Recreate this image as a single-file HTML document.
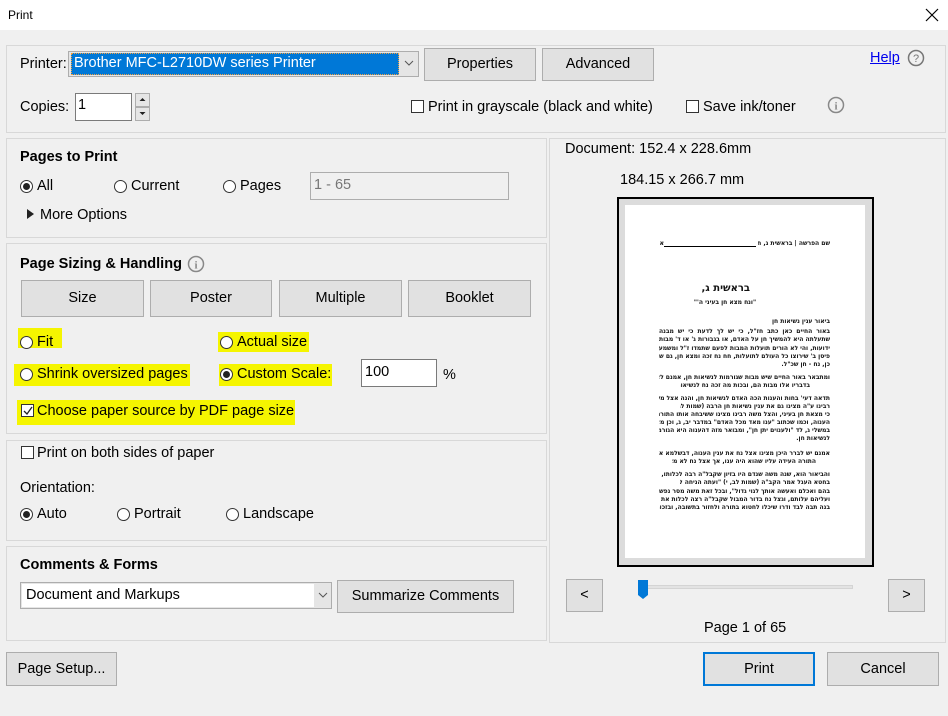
<!DOCTYPE html>
<html><head><meta charset="utf-8"><style>
*{box-sizing:border-box;margin:0;padding:0}
body{width:948px;height:716px;background:#f0f0f0;font-family:"Liberation Sans",sans-serif;font-size:14.5px;color:#000;position:relative;overflow:hidden}
.a{position:absolute}
.t{position:absolute;line-height:18px;white-space:nowrap}
.p{position:absolute;border:1px solid #d8d8d8}
.btn{position:absolute;background:#e1e1e1;border:1px solid #adadad;text-align:center;font-size:14.5px}
.r{position:absolute;width:13px;height:13px;border:1px solid #333;border-radius:50%;background:#fff}
.r.on::after{content:"";position:absolute;left:2px;top:2px;width:7px;height:7px;border-radius:50%;background:#222}
.c{position:absolute;width:13px;height:13px;border:1px solid #333;background:#fff}
.hl{position:absolute;background:#f5f500}
.b{font-weight:bold}
.inp{position:absolute;background:#fff;border:1px solid #7a7a7a}
.heb{position:absolute;direction:rtl;font-size:6px;font-weight:bold;line-height:7px;white-space:nowrap;overflow:hidden;text-align:justify;text-align-last:justify;color:#111;font-family:"DejaVu Sans",sans-serif}
</style></head><body>
<div class="a" style="left:0;top:0;width:948px;height:30px;background:#fff"></div>
<div class="t" style="left:8px;top:6px;font-size:12px">Print</div>
<svg class="a" style="left:925px;top:8px" width="14" height="14"><path d="M1 1L13 13M13 1L1 13" stroke="#000" stroke-width="1.2"/></svg>

<div class="p" style="left:6px;top:45px;width:940px;height:88px"></div>
<div class="t" style="left:20px;top:55px">Printer:</div>
<div class="a" style="left:68px;top:51px;width:351px;height:26px;background:#e5e5e5;border:1px solid #adadad"></div>
<div class="a" style="left:71px;top:53px;width:328px;height:22px;background:#0078d7;border:1px dotted #f0a040"></div>
<div class="t" style="left:74px;top:54px;color:#fff">Brother MFC-L2710DW series Printer</div>
<svg class="a" style="left:404px;top:60px" width="10" height="6"><path d="M1 1L5 5L9 1" stroke="#555" fill="none"/></svg>
<div class="btn" style="left:424px;top:48px;width:112px;height:33px;line-height:31px">Properties</div>
<div class="btn" style="left:542px;top:48px;width:112px;height:33px;line-height:31px">Advanced</div>
<div class="t" style="left:870px;top:49px;color:#0000ee;text-decoration:underline">Help</div>
<svg class="a" style="left:907px;top:49px" width="18" height="18"><circle cx="9" cy="9" r="7.5" stroke="#777" stroke-width="1.5" fill="none"/><text x="9" y="13" font-size="11" text-anchor="middle" fill="#777" font-family="Liberation Sans">?</text></svg>
<div class="t" style="left:20px;top:98px">Copies:</div>
<div class="inp" style="left:75px;top:93px;width:57px;height:28px"></div>
<div class="t" style="left:78px;top:96px">1</div>
<div class="a" style="left:135px;top:93px;width:15px;height:14px;background:#e5e5e5;border:1px solid #adadad"></div>
<div class="a" style="left:135px;top:107px;width:15px;height:14px;background:#e5e5e5;border:1px solid #adadad"></div>
<svg class="a" style="left:139px;top:97px" width="7" height="20"><path d="M0.5 4L3.5 1L6.5 4Z M0.5 15L3.5 18L6.5 15Z" fill="#222"/></svg>
<div class="c" style="left:411px;top:100px"></div>
<div class="t" style="left:428px;top:98px">Print in grayscale (black and white)</div>
<div class="c" style="left:686px;top:100px"></div>
<div class="t" style="left:703px;top:98px">Save ink/toner</div>
<svg class="a" style="left:827px;top:96px" width="18" height="18"><circle cx="9" cy="9" r="7.5" stroke="#888" stroke-width="1.5" fill="none"/><text x="9" y="13.5" font-size="11" text-anchor="middle" fill="#888" font-family="Liberation Serif" font-weight="bold">i</text></svg>

<div class="p" style="left:6px;top:138px;width:541px;height:100px"></div>
<div class="t b" style="left:20px;top:148px">Pages to Print</div>
<div class="r on" style="left:20px;top:180px"></div><div class="t" style="left:37px;top:177px">All</div>
<div class="r" style="left:114px;top:180px"></div><div class="t" style="left:131px;top:177px">Current</div>
<div class="r" style="left:223px;top:180px"></div><div class="t" style="left:240px;top:177px">Pages</div>
<div class="a" style="left:310px;top:172px;width:199px;height:28px;border:1px solid #adadad;background:#f0f0f0"></div>
<div class="t" style="left:314px;top:176px;color:#777">1 - 65</div>
<svg class="a" style="left:27px;top:209px" width="8" height="10"><path d="M0 0L7 5L0 10Z" fill="#222"/></svg>
<div class="t" style="left:40px;top:206px">More Options</div>

<div class="p" style="left:6px;top:243px;width:541px;height:191px"></div>
<div class="t b" style="left:20px;top:255px">Page Sizing &amp; Handling</div>
<svg class="a" style="left:187px;top:255px" width="18" height="18"><circle cx="9" cy="9" r="7.5" stroke="#888" stroke-width="1.5" fill="none"/><text x="9" y="13.5" font-size="11" text-anchor="middle" fill="#888" font-family="Liberation Serif" font-weight="bold">i</text></svg>
<div class="btn" style="left:21px;top:280px;width:123px;height:37px;line-height:35px">Size</div>
<div class="btn" style="left:150px;top:280px;width:122px;height:37px;line-height:35px">Poster</div>
<div class="btn" style="left:279px;top:280px;width:123px;height:37px;line-height:35px">Multiple</div>
<div class="btn" style="left:408px;top:280px;width:123px;height:37px;line-height:35px">Booklet</div>
<div class="hl" style="left:18px;top:328px;width:44px;height:20px"></div>
<div class="hl" style="left:218px;top:332px;width:91px;height:20px"></div>
<div class="hl" style="left:14px;top:364px;width:176px;height:22px"></div>
<div class="hl" style="left:219px;top:364px;width:113px;height:22px"></div>
<div class="hl" style="left:17px;top:400px;width:278px;height:25px"></div>
<div class="r" style="left:20px;top:336px"></div><div class="t" style="left:37px;top:333px">Fit</div>
<div class="r" style="left:220px;top:336px"></div><div class="t" style="left:237px;top:333px">Actual size</div>
<div class="r" style="left:20px;top:368px"></div><div class="t" style="left:37px;top:365px">Shrink oversized pages</div>
<div class="r on" style="left:220px;top:368px"></div><div class="t" style="left:237px;top:365px">Custom Scale:</div>
<div class="inp" style="left:361px;top:359px;width:76px;height:28px"></div>
<div class="t" style="left:365px;top:363px">100</div>
<div class="t" style="left:443px;top:366px">%</div>
<div class="c" style="left:21px;top:404px"></div>
<svg class="a" style="left:23px;top:406px" width="10" height="10"><path d="M1 5L4 8L9 1" stroke="#222" stroke-width="1.3" fill="none"/></svg>
<div class="t" style="left:37px;top:402px">Choose paper source by PDF page size</div>

<div class="p" style="left:6px;top:440px;width:541px;height:101px"></div>
<div class="c" style="left:21px;top:446px"></div>
<div class="t" style="left:37px;top:444px">Print on both sides of paper</div>
<div class="t" style="left:20px;top:479px">Orientation:</div>
<div class="r on" style="left:20px;top:508px"></div><div class="t" style="left:37px;top:505px">Auto</div>
<div class="r" style="left:117px;top:508px"></div><div class="t" style="left:134px;top:505px">Portrait</div>
<div class="r" style="left:226px;top:508px"></div><div class="t" style="left:243px;top:505px">Landscape</div>

<div class="p" style="left:6px;top:546px;width:541px;height:95px"></div>
<div class="t b" style="left:20px;top:556px">Comments &amp; Forms</div>
<div class="a" style="left:20px;top:582px;width:312px;height:27px;background:#e5e5e5;border:1px solid #adadad"></div>
<div class="a" style="left:22px;top:584px;width:292px;height:23px;background:#fff"></div>
<div class="t" style="left:26px;top:586px">Document and Markups</div>
<svg class="a" style="left:318px;top:592px" width="10" height="6"><path d="M1 1L5 5L9 1" stroke="#555" fill="none"/></svg>
<div class="btn" style="left:337px;top:580px;width:177px;height:33px;line-height:31px">Summarize Comments</div>

<div class="btn" style="left:6px;top:652px;width:111px;height:34px;line-height:32px">Page Setup...</div>
<div class="btn" style="left:703px;top:652px;width:112px;height:34px;line-height:30px;border:2px solid #0078d7">Print</div>
<div class="btn" style="left:827px;top:652px;width:112px;height:34px;line-height:32px">Cancel</div>

<div class="p" style="left:549px;top:138px;width:397px;height:505px"></div>
<div class="t" style="left:565px;top:140px">Document: 152.4 x 228.6mm</div>
<div class="t" style="left:620px;top:171px">184.15 x 266.7 mm</div>
<div class="a" style="left:617px;top:197px;width:257px;height:370px;border:2px solid #000;background:#dcdcdc"></div>
<div class="a" style="left:625px;top:205px;width:240px;height:353px;background:#fff"></div>
<div class="a" style="left:664px;top:246px;width:92px;height:1px;background:#000"></div>
<div class="heb" style="left:758px;top:240px;width:72px;text-align:right;text-align-last:right">שם הפרשה | בראשית ג, ח</div>
<div class="heb" style="left:658px;top:240px;width:6px">א</div>
<div class="heb" style="left:700px;top:282px;width:50px;font-size:10px;line-height:13px;text-align:center;text-align-last:center">בראשית ג, ח</div>
<div class="heb" style="left:690px;top:299px;width:70px;font-size:6px;text-align:center;text-align-last:center">"ונח מצא חן בעיני ה'"</div>
<div class="heb" style="left:770px;top:318px;width:60px;text-align:right;text-align-last:right">ביאור ענין נשיאות חן</div>
<div class="heb" style="left:659px;top:328px;width:171px">באור החיים כאן כתב חז"ל, כי יש לך לדעת כי יש מבנה</div>
<div class="heb" style="left:659px;top:336px;width:171px">שתעלתה היא להמשיך חן על האדם, או בגבורות ג' או ד' מבות</div>
<div class="heb" style="left:659px;top:345px;width:171px">ידועות, והי לא הורים תועלות המבות לפעם שתמדו ז"ל ומשמעו</div>
<div class="heb" style="left:659px;top:353px;width:171px">פיסן ב' שירוצו כל העולם לתועלות, חח נח זכה ומצא חן, גם שמו יגיד</div>
<div class="heb" style="left:780px;top:361px;width:50px;text-align:right;text-align-last:right">כן, נח - חן שכ"ל.</div>
<div class="heb" style="left:659px;top:374px;width:171px">ומתבאר באור החיים שיש מבות שגורמות לנשיאות חן, אמנם לא נתבאר</div>
<div class="heb" style="left:680px;top:382px;width:130px">בדבריו אלו מבות הם, ובכות מה זכה נח לנשיאות חן זו.</div>
<div class="heb" style="left:659px;top:395px;width:171px">תדאה דעי' בחות והענות הכה האדם לנשיאות חן, והנה אצל משה</div>
<div class="heb" style="left:680px;top:403px;width:150px">רבינו ע"ה מצינו גם את ענין נשיאות חן הרבה (שמות לג, יז)</div>
<div class="heb" style="left:659px;top:411px;width:171px">כי מצאת חן בעיני, והצל משה רבינו מצינו ששיבחה אותו התורה במדת</div>
<div class="heb" style="left:659px;top:419px;width:171px">הענוה, וכמו שכתוב "ענו מאד מכל האדם" במדבר יב, ג, וכן מצינו</div>
<div class="heb" style="left:659px;top:427px;width:171px">במשלי ג, לד "ולענוים יתן חן", ומבואר מזה דהענוה היא הגורמת</div>
<div class="heb" style="left:790px;top:435px;width:40px;text-align:right;text-align-last:right">לנשיאות חן.</div>
<div class="heb" style="left:659px;top:450px;width:171px">אמנם יש לברר היכן מצינו אצל נח את ענין הענוה, דבשלמא אצל משה</div>
<div class="heb" style="left:672px;top:458px;width:144px">התורה העידה עליו שהוא היה ענו, אך אצל נח לא מצינו זאת.</div>
<div class="heb" style="left:659px;top:471px;width:171px">והביאור הוא, שנה משה שנדם היו בזיון שקבל"ה רבה לכלותו, אצל משה</div>
<div class="heb" style="left:680px;top:479px;width:150px">בחטא העגל אמר הקב"ה (שמות לב, י) "ועתה הניחה לי ויחר אפי</div>
<div class="heb" style="left:659px;top:488px;width:171px">בהם ואכלם ואעשה אותך לגוי גדול", ובכל זאת משה מסר נפשו להתפלל עליהם</div>
<div class="heb" style="left:659px;top:496px;width:171px">ועליהם עלותם, וגצל נח בדור המבול שקבל"ה רצה לכלות את העולם, ונח</div>
<div class="heb" style="left:659px;top:504px;width:171px">בנה תבה לבד ודרו שיכלו לחטוא בתורה ולחזור בתשובה, ובזכות זו</div>

<div class="btn" style="left:566px;top:579px;width:37px;height:33px;line-height:31px">&lt;</div>
<div class="btn" style="left:888px;top:579px;width:37px;height:33px;line-height:31px">&gt;</div>
<div class="a" style="left:640px;top:585px;width:213px;height:4px;background:#e3e3e3;border:1px solid #d4d4d4"></div>
<svg class="a" style="left:638px;top:580px" width="11" height="20"><path d="M0 0H10V15L5 19L0 15Z" fill="#0078d7"/></svg>
<div class="t" style="left:704px;top:619px">Page 1 of 65</div>
</body></html>
